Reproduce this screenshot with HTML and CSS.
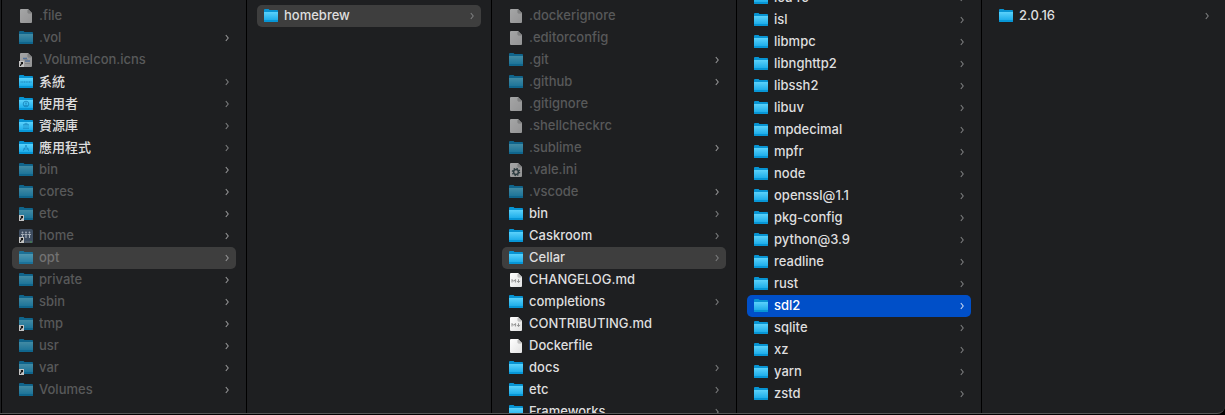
FILE: index.html
```html
<!DOCTYPE html>
<html lang="zh-Hant">
<head>
<meta charset="utf-8">
<title>Cellar</title>
<link rel="stylesheet" href="styles.css">
</head>
<body>
<svg class="defs" aria-hidden="true">
  <defs>
    <linearGradient id="blue" x1="0" y1="0" x2="0" y2="1"><stop offset="0" stop-color="#5bd2fb"/><stop offset="1" stop-color="#0fa5e6"/></linearGradient>
    <linearGradient id="paper" x1="0" y1="0" x2="1" y2="1"><stop offset="0" stop-color="#fff"/><stop offset="1" stop-color="#e2e2e2"/></linearGradient>
    <symbol id="folder" viewBox="0 0 16 16"><path d="M1 2Q1 1 2 1H5.3Q6 1 6.4 2H14.2Q15 2 15 3V5H1Z" fill="#0794d3"/><path d="M1 4H15V13Q15 14 14 14H2Q1 14 1 13Z" fill="url(#blue)"/><path d="M1 12H15V13Q15 14 14 14H2Q1 14 1 13Z" fill="#0796d6"/></symbol>
    <symbol id="file" viewBox="0 0 16 16"><path d="M3 1H10L14 5V14Q14 15 13 15H3Q2 15 2 14V2Q2 1 3 1Z" fill="url(#paper)"/><path d="M10 1L14 5H10.8Q10 5 10 4.2Z" fill="#c2c2c2"/><path d="M9.7 2V4.3Q9.7 5.4 10.8 5.4H13.5" fill="none" stroke="#aaa" stroke-width=".5"/></symbol>
    <symbol id="alias" viewBox="0 0 16 16"><rect x="1" y="9" width="5" height="6" fill="#c4c4c4"/><path d="M2.5 10H5V12.6L4.3 11.9Q3.2 12.5 3 14H2Q2 12 3.3 10.9Z" fill="#111"/></symbol>
    <symbol id="chevron" viewBox="0 0 6 8"><path d="M1.8 1L4.2 4L1.8 7" fill="none" stroke="currentColor" stroke-width="1.1"/></symbol>
  </defs>
</svg>
<main class="browser">
  <ul class="column">
    <li><a class="row dim" href="#"><svg class="icon"><use href="#file"/></svg><span class="name">.file</span></a></li>
    <li><a class="row dim" href="#"><svg class="icon"><use href="#folder"/></svg><span class="name">.vol</span><svg class="chevron"><use href="#chevron"/></svg></a></li>
    <li><a class="row dim" href="#"><svg class="icon" viewBox="0 0 16 16"><use href="#file"/><path d="M5 6.5H9M7 9H12" stroke="#235799" stroke-width="1.4"/><path d="M6 7.8H10M7 11.5H12" stroke="#777" stroke-width="1"/><use class="badge" href="#alias"/></svg><span class="name">.VolumeIcon.icns</span></a></li>
    <li><a class="row" href="#"><svg class="icon" viewBox="0 0 16 16"><use href="#folder"/><path d="M2.5 8H13.5" stroke="#1580b8" stroke-width="1.8" stroke-dasharray="1.2 .5" opacity=".5"/></svg><span class="name">系統</span><svg class="chevron"><use href="#chevron"/></svg></a></li>
    <li><a class="row" href="#"><svg class="icon" viewBox="0 0 16 16"><use href="#folder"/><g fill="none" stroke="#1580b8" stroke-width=".8"><circle cx="8" cy="8" r="2.8"/><path d="M6.2 10Q8 8.2 9.8 10"/></g><circle cx="8" cy="7.3" r="1.1" fill="#1580b8" opacity=".6"/></svg><span class="name">使用者</span><svg class="chevron"><use href="#chevron"/></svg></a></li>
    <li><a class="row" href="#"><svg class="icon" viewBox="0 0 16 16"><use href="#folder"/><path d="M5 7L8 5L11 7ZM5 10.5H11M6 7.5V10M8 7.5V10M10 7.5V10" fill="#1580b8" stroke="#1580b8" stroke-width=".8" opacity=".65"/></svg><span class="name">資源庫</span><svg class="chevron"><use href="#chevron"/></svg></a></li>
    <li><a class="row" href="#"><svg class="icon" viewBox="0 0 16 16"><use href="#folder"/><path d="M7.5 5L10.8 11M8.5 5L5.2 11M5 9H11" fill="none" stroke="#1580b8" stroke-width="1" opacity=".65"/></svg><span class="name">應用程式</span><svg class="chevron"><use href="#chevron"/></svg></a></li>
    <li><a class="row dim" href="#"><svg class="icon"><use href="#folder"/></svg><span class="name">bin</span><svg class="chevron"><use href="#chevron"/></svg></a></li>
    <li><a class="row dim" href="#"><svg class="icon"><use href="#folder"/></svg><span class="name">cores</span><svg class="chevron"><use href="#chevron"/></svg></a></li>
    <li><a class="row dim" href="#"><svg class="icon"><use href="#folder"/><use class="badge" href="#alias"/></svg><span class="name">etc</span><svg class="chevron"><use href="#chevron"/></svg></a></li>
    <li><a class="row dim" href="#"><svg class="icon" viewBox="0 0 16 16"><path d="M3 1H13Q15 1 15 3V14Q15 15 14 15H2Q1 15 1 14V3Q1 1 3 1Z" fill="#536d8c"/><path d="M4.5 6V10M8 6V10M11.5 6V10M3 6.5H6M6.5 6.5H9.5M10 6.5H13" stroke="#e8edf3" stroke-width="1.1"/><circle cx="4.5" cy="4.5" r=".9" fill="#e8edf3"/><circle cx="8" cy="4.5" r=".9" fill="#e8edf3"/><circle cx="11.5" cy="4.5" r=".9" fill="#e8edf3"/><path d="M7 14H12" stroke="#777"/><path d="M12 14H14" stroke="#54cf45"/><use class="badge" href="#alias"/></svg><span class="name">home</span><svg class="chevron"><use href="#chevron"/></svg></a></li>
    <li><a class="row dim path" href="#"><svg class="icon"><use href="#folder"/></svg><span class="name">opt</span><svg class="chevron"><use href="#chevron"/></svg></a></li>
    <li><a class="row dim" href="#"><svg class="icon"><use href="#folder"/></svg><span class="name">private</span><svg class="chevron"><use href="#chevron"/></svg></a></li>
    <li><a class="row dim" href="#"><svg class="icon"><use href="#folder"/></svg><span class="name">sbin</span><svg class="chevron"><use href="#chevron"/></svg></a></li>
    <li><a class="row dim" href="#"><svg class="icon"><use href="#folder"/><use class="badge" href="#alias"/></svg><span class="name">tmp</span><svg class="chevron"><use href="#chevron"/></svg></a></li>
    <li><a class="row dim" href="#"><svg class="icon"><use href="#folder"/></svg><span class="name">usr</span><svg class="chevron"><use href="#chevron"/></svg></a></li>
    <li><a class="row dim" href="#"><svg class="icon"><use href="#folder"/><use class="badge" href="#alias"/></svg><span class="name">var</span><svg class="chevron"><use href="#chevron"/></svg></a></li>
    <li><a class="row dim" href="#"><svg class="icon"><use href="#folder"/></svg><span class="name">Volumes</span><svg class="chevron"><use href="#chevron"/></svg></a></li>
  </ul>
  <ul class="column">
    <li><a class="row path" href="#"><svg class="icon"><use href="#folder"/></svg><span class="name">homebrew</span><svg class="chevron"><use href="#chevron"/></svg></a></li>
  </ul>
  <ul class="column">
    <li><a class="row dim" href="#"><svg class="icon"><use href="#file"/></svg><span class="name">.dockerignore</span></a></li>
    <li><a class="row dim" href="#"><svg class="icon"><use href="#file"/></svg><span class="name">.editorconfig</span></a></li>
    <li><a class="row dim" href="#"><svg class="icon"><use href="#folder"/></svg><span class="name">.git</span><svg class="chevron"><use href="#chevron"/></svg></a></li>
    <li><a class="row dim" href="#"><svg class="icon"><use href="#folder"/></svg><span class="name">.github</span><svg class="chevron"><use href="#chevron"/></svg></a></li>
    <li><a class="row dim" href="#"><svg class="icon"><use href="#file"/></svg><span class="name">.gitignore</span></a></li>
    <li><a class="row dim" href="#"><svg class="icon"><use href="#file"/></svg><span class="name">.shellcheckrc</span></a></li>
    <li><a class="row dim" href="#"><svg class="icon"><use href="#folder"/></svg><span class="name">.sublime</span><svg class="chevron"><use href="#chevron"/></svg></a></li>
    <li><a class="row dim" href="#"><svg class="icon" viewBox="0 0 16 16"><use href="#file"/><g class="badge" fill="none" stroke="#2d3c40"><circle cx="8" cy="10" r="2.4" stroke-width="1.5"/><circle cx="8" cy="10" r="3.6" stroke-width="1.3" stroke-dasharray="1.4 1.43"/></g></svg><span class="name">.vale.ini</span></a></li>
    <li><a class="row dim" href="#"><svg class="icon"><use href="#folder"/></svg><span class="name">.vscode</span><svg class="chevron"><use href="#chevron"/></svg></a></li>
    <li><a class="row" href="#"><svg class="icon"><use href="#folder"/></svg><span class="name">bin</span><svg class="chevron"><use href="#chevron"/></svg></a></li>
    <li><a class="row" href="#"><svg class="icon"><use href="#folder"/></svg><span class="name">Caskroom</span><svg class="chevron"><use href="#chevron"/></svg></a></li>
    <li><a class="row path" href="#"><svg class="icon"><use href="#folder"/></svg><span class="name">Cellar</span><svg class="chevron"><use href="#chevron"/></svg></a></li>
    <li><a class="row" href="#"><svg class="icon" viewBox="0 0 16 16"><use href="#file"/><path d="M4 10.5V7.5L5.7 9.3L7.4 7.5V10.5M10.5 7.3V10M8.8 8.9L10.5 10.6L12.2 8.9" fill="none" stroke="#888" stroke-width=".9"/></svg><span class="name">CHANGELOG.md</span></a></li>
    <li><a class="row" href="#"><svg class="icon"><use href="#folder"/></svg><span class="name">completions</span><svg class="chevron"><use href="#chevron"/></svg></a></li>
    <li><a class="row" href="#"><svg class="icon" viewBox="0 0 16 16"><use href="#file"/><path d="M4 10.5V7.5L5.7 9.3L7.4 7.5V10.5M10.5 7.3V10M8.8 8.9L10.5 10.6L12.2 8.9" fill="none" stroke="#888" stroke-width=".9"/></svg><span class="name">CONTRIBUTING.md</span></a></li>
    <li><a class="row" href="#"><svg class="icon"><use href="#file"/></svg><span class="name">Dockerfile</span></a></li>
    <li><a class="row" href="#"><svg class="icon"><use href="#folder"/></svg><span class="name">docs</span><svg class="chevron"><use href="#chevron"/></svg></a></li>
    <li><a class="row" href="#"><svg class="icon"><use href="#folder"/></svg><span class="name">etc</span><svg class="chevron"><use href="#chevron"/></svg></a></li>
    <li><a class="row" href="#"><svg class="icon"><use href="#folder"/></svg><span class="name">Frameworks</span><svg class="chevron"><use href="#chevron"/></svg></a></li>
  </ul>
  <ul class="column scrolled">
    <li><a class="row" href="#"><svg class="icon"><use href="#folder"/></svg><span class="name">icu4c</span><svg class="chevron"><use href="#chevron"/></svg></a></li>
    <li><a class="row" href="#"><svg class="icon"><use href="#folder"/></svg><span class="name">isl</span><svg class="chevron"><use href="#chevron"/></svg></a></li>
    <li><a class="row" href="#"><svg class="icon"><use href="#folder"/></svg><span class="name">libmpc</span><svg class="chevron"><use href="#chevron"/></svg></a></li>
    <li><a class="row" href="#"><svg class="icon"><use href="#folder"/></svg><span class="name">libnghttp2</span><svg class="chevron"><use href="#chevron"/></svg></a></li>
    <li><a class="row" href="#"><svg class="icon"><use href="#folder"/></svg><span class="name">libssh2</span><svg class="chevron"><use href="#chevron"/></svg></a></li>
    <li><a class="row" href="#"><svg class="icon"><use href="#folder"/></svg><span class="name">libuv</span><svg class="chevron"><use href="#chevron"/></svg></a></li>
    <li><a class="row" href="#"><svg class="icon"><use href="#folder"/></svg><span class="name">mpdecimal</span><svg class="chevron"><use href="#chevron"/></svg></a></li>
    <li><a class="row" href="#"><svg class="icon"><use href="#folder"/></svg><span class="name">mpfr</span><svg class="chevron"><use href="#chevron"/></svg></a></li>
    <li><a class="row" href="#"><svg class="icon"><use href="#folder"/></svg><span class="name">node</span><svg class="chevron"><use href="#chevron"/></svg></a></li>
    <li><a class="row" href="#"><svg class="icon"><use href="#folder"/></svg><span class="name">openssl@1.1</span><svg class="chevron"><use href="#chevron"/></svg></a></li>
    <li><a class="row" href="#"><svg class="icon"><use href="#folder"/></svg><span class="name">pkg-config</span><svg class="chevron"><use href="#chevron"/></svg></a></li>
    <li><a class="row" href="#"><svg class="icon"><use href="#folder"/></svg><span class="name">python@3.9</span><svg class="chevron"><use href="#chevron"/></svg></a></li>
    <li><a class="row" href="#"><svg class="icon"><use href="#folder"/></svg><span class="name">readline</span><svg class="chevron"><use href="#chevron"/></svg></a></li>
    <li><a class="row" href="#"><svg class="icon"><use href="#folder"/></svg><span class="name">rust</span><svg class="chevron"><use href="#chevron"/></svg></a></li>
    <li><a class="row selected" href="#" aria-current="true"><svg class="icon"><use href="#folder"/></svg><span class="name">sdl2</span><svg class="chevron"><use href="#chevron"/></svg></a></li>
    <li><a class="row" href="#"><svg class="icon"><use href="#folder"/></svg><span class="name">sqlite</span><svg class="chevron"><use href="#chevron"/></svg></a></li>
    <li><a class="row" href="#"><svg class="icon"><use href="#folder"/></svg><span class="name">xz</span><svg class="chevron"><use href="#chevron"/></svg></a></li>
    <li><a class="row" href="#"><svg class="icon"><use href="#folder"/></svg><span class="name">yarn</span><svg class="chevron"><use href="#chevron"/></svg></a></li>
    <li><a class="row" href="#"><svg class="icon"><use href="#folder"/></svg><span class="name">zstd</span><svg class="chevron"><use href="#chevron"/></svg></a></li>
  </ul>
  <ul class="column">
    <li><a class="row" href="#"><svg class="icon"><use href="#folder"/></svg><span class="name">2.0.16</span><svg class="chevron"><use href="#chevron"/></svg></a></li>
  </ul>
</main>
</body>
</html>
```
FILE: styles.css
```css
* {
  box-sizing: border-box;
}

body {
  margin: 0;
  height: 100vh;
  overflow: hidden;
  background: #000;
  font: 500 13px/20px Inter, "Noto Sans CJK TC", sans-serif;
  color: #dededf;
}

.defs {
  position: absolute;
  width: 0;
  height: 0;
}

.browser {
  display: grid;
  grid-template-columns: repeat(5, minmax(245px, 1fr));
  height: calc(100vh - 1px);
  padding-left: 1px;
  overflow: hidden;
  background: #1e1f21;
  border-bottom: 1px solid #565758;
  border-bottom-right-radius: 8px;
}

.column {
  min-height: 0;
  margin: 0;
  padding: 5px 10px 0;
  overflow: hidden;
  list-style: none;
  border-left: 1px solid #000;
}

.scrolled li:first-child {
  margin-top: -18px;
}

.row {
  display: flex;
  align-items: center;
  height: 22px;
  padding: 0 6px;
  border-radius: 5px;
  color: inherit;
  text-decoration: none;
}

.icon {
  flex: none;
  width: 16px;
  height: 16px;
  margin-right: 5px;
}

.name {
  flex: 1;
  min-width: 0;
  padding-bottom: 2px;
  overflow: hidden;
  white-space: nowrap;
  text-overflow: ellipsis;
}

.chevron {
  flex: none;
  width: 6px;
  height: 8px;
  color: #7b7c7d;
}

.dim .name {
  color: #58595a;
}

.dim .icon > * {
  opacity: 0.6;
}

.dim .icon > .badge {
  opacity: 1;
}

.dim .chevron {
  color: #949495;
}

.path {
  background: #3e3e3e;
}

.dim.path .name {
  color: #727272;
}

.selected {
  background: #004fc8;
  color: #fff;
}

.selected .chevron {
  color: #c4d5f1;
}
```
